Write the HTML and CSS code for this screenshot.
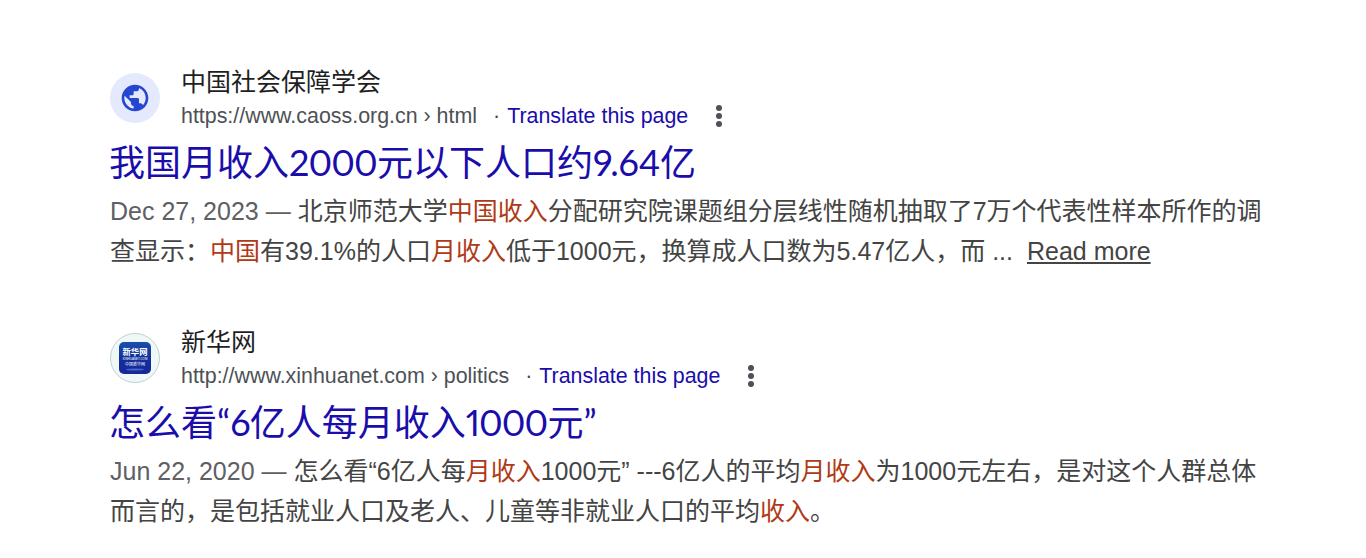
FILE: index.html
```
<!DOCTYPE html>
<html lang="zh-CN">
  <head>
    <meta charset="UTF-8" />
    <meta name="viewport" content="width=device-width, initial-scale=1.0" />
    <title>中国 月收入</title>
    <link rel="stylesheet" href="styles.css" />
  </head>
  <body>
    <main class="results">
      <article class="result">
        <div class="source">
          <div class="favicon favicon-globe">
            <svg viewBox="0 0 24 24" width="32" height="32" fill="#2546cf">
              <path d="M12 2C6.48 2 2 6.48 2 12s4.48 10 10 10 10-4.48 10-10S17.52 2 12 2zM4 12c0-.61.08-1.21.21-1.78L8.99 15v1c0 1.1.9 2 2 2v1.93C7.06 19.43 4 16.07 4 12zm13.89 5.4c-.26-.81-1-1.4-1.9-1.4h-1v-3c0-.55-.45-1-1-1h-6v-2h2c.55 0 1-.45 1-1V7h2c1.1 0 2-.9 2-2v-.41C17.92 5.77 20 8.65 20 12c0 2.08-.81 3.98-2.11 5.4z" />
            </svg>
          </div>
          <div class="site">
            <div class="site-name">中国社会保障学会</div>
            <div class="site-url">
              <cite>https://www.caoss.org.cn › html</cite>
              <span class="dot">·</span>
              <a class="translate" href="#">Translate this page</a>
              <button class="menu" aria-label="About this result"><i></i><i></i><i></i></button>
            </div>
          </div>
        </div>
        <h3 class="title"><a href="#">我国月收入<span class="num">2000</span>元以下人口约<span class="num decimal">9.64</span>亿</a></h3>
        <p class="snippet"><span class="row"><span class="date">Dec 27, 2023 — </span>北京师范大学<em>中国收入</em>分配研究院课题组分层线性随机抽取了7万个代表性样本所作的调</span>
        <span class="row">查显示：<em>中国</em>有39.1%的人口<em>月收入</em>低于1000元，换算成人口数为5.47亿人，而 ... <a class="more" href="#">Read more</a></span></p>
      </article>

      <article class="result">
        <div class="source">
          <div class="favicon favicon-xinhua">
            <svg viewBox="0 0 32 32" width="32" height="32">
              <defs>
                <linearGradient id="xinhua" x1="0" y1="0" x2="0" y2="1">
                  <stop offset="0" stop-color="#1c4fa8" />
                  <stop offset="0.5" stop-color="#12309a" />
                  <stop offset="1" stop-color="#16289a" />
                </linearGradient>
              </defs>
              <rect width="32" height="32" rx="5" fill="url(#xinhua)" />
              <text x="16" y="12.5" class="logo-name">新华网</text>
              <text x="16" y="17.5" class="logo-url">XINHUANET.COM</text>
              <text x="16" y="24" class="logo-sub">中国新华网</text>
              <ellipse cx="16" cy="27.5" rx="9" ry="1" fill="#5c7fe0" opacity="0.7" />
            </svg>
          </div>
          <div class="site">
            <div class="site-name">新华网</div>
            <div class="site-url">
              <cite>http://www.xinhuanet.com › politics</cite>
              <span class="dot">·</span>
              <a class="translate" href="#">Translate this page</a>
              <button class="menu" aria-label="About this result"><i></i><i></i><i></i></button>
            </div>
          </div>
        </div>
        <h3 class="title"><a href="#">怎么看“<span class="num">6</span>亿人每月收入<span class="num">1000</span>元”</a></h3>
        <p class="snippet"><span class="row"><span class="date">Jun 22, 2020 — </span>怎么看“6亿人每<em>月收入</em>1000元” ---6亿人的平均<em>月收入</em>为1000元左右，是对这个人群总体</span>
        <span class="row">而言的，是包括就业人口及老人、儿童等非就业人口的平均<em>收入</em>。</span></p>
      </article>
    </main>
  </body>
</html>
```
FILE: styles.css
```
body {
  margin: 0;
  background-color: #fff;
  font-family: "Liberation Sans", "Noto Sans CJK SC", sans-serif;
  color: #444;
  overflow: hidden;
}
a {
  color: #1a0dab;
  text-decoration: none;
}
.results {
  padding: 64px 0 0 110px;
}
.result {
  height: 260px;
}
.source {
  display: flex;
  align-items: center;
  height: 68px;
}
.favicon {
  display: flex;
  align-items: center;
  justify-content: center;
  box-sizing: border-box;
  width: 50px;
  height: 50px;
  margin-right: 21px;
  border-radius: 50%;
}
.favicon-globe {
  background-color: #e4e9fd;
}
.favicon-xinhua {
  background-color: #f0f7f7;
  border: 1px solid #c3d0d0;
}
.logo-name,
.logo-url,
.logo-sub {
  fill: #fff;
  text-anchor: middle;
}
.logo-name {
  font-size: 8.3px;
  font-weight: bold;
}
.logo-url {
  font-size: 3px;
}
.logo-sub {
  font-size: 4px;
}
.site {
  padding-top: 2px;
}
.site-name {
  color: #1f1f1f;
  font-size: 25px;
  line-height: 34px;
}
.site-url {
  display: flex;
  align-items: center;
  height: 34px;
  font-size: 21.4px;
  white-space: nowrap;
}
.site-url cite {
  font-style: normal;
  color: #4d5156;
}
.dot {
  margin: 0 7px 0 16px;
}
.menu {
  display: flex;
  flex-direction: column;
  gap: 2px;
  margin: 0 0 0 28px;
  padding: 0;
  border: none;
  background: none;
}
.menu i {
  width: 6px;
  height: 6px;
  border-radius: 50%;
  background-color: #4d5156;
}
.title {
  margin: 0 0 0 -1px;
  font-family: Lato, "Noto Sans CJK SC", sans-serif;
  font-size: 36px;
  font-weight: normal;
  line-height: 60px;
  white-space: nowrap;
}
.title .num {
  font-variant-numeric: proportional-nums;
  letter-spacing: -0.9px;
}
.title .decimal {
  letter-spacing: -0.2px;
}
.snippet {
  margin: 0;
  font-size: 25px;
  line-height: 39.5px;
}
.row {
  display: block;
  white-space: nowrap;
}
.date {
  color: #5e6064;
}
.snippet em {
  font-style: normal;
  color: #b03a16;
}
.more {
  margin-left: 7px;
  color: #444;
  text-decoration: underline;
}
```
